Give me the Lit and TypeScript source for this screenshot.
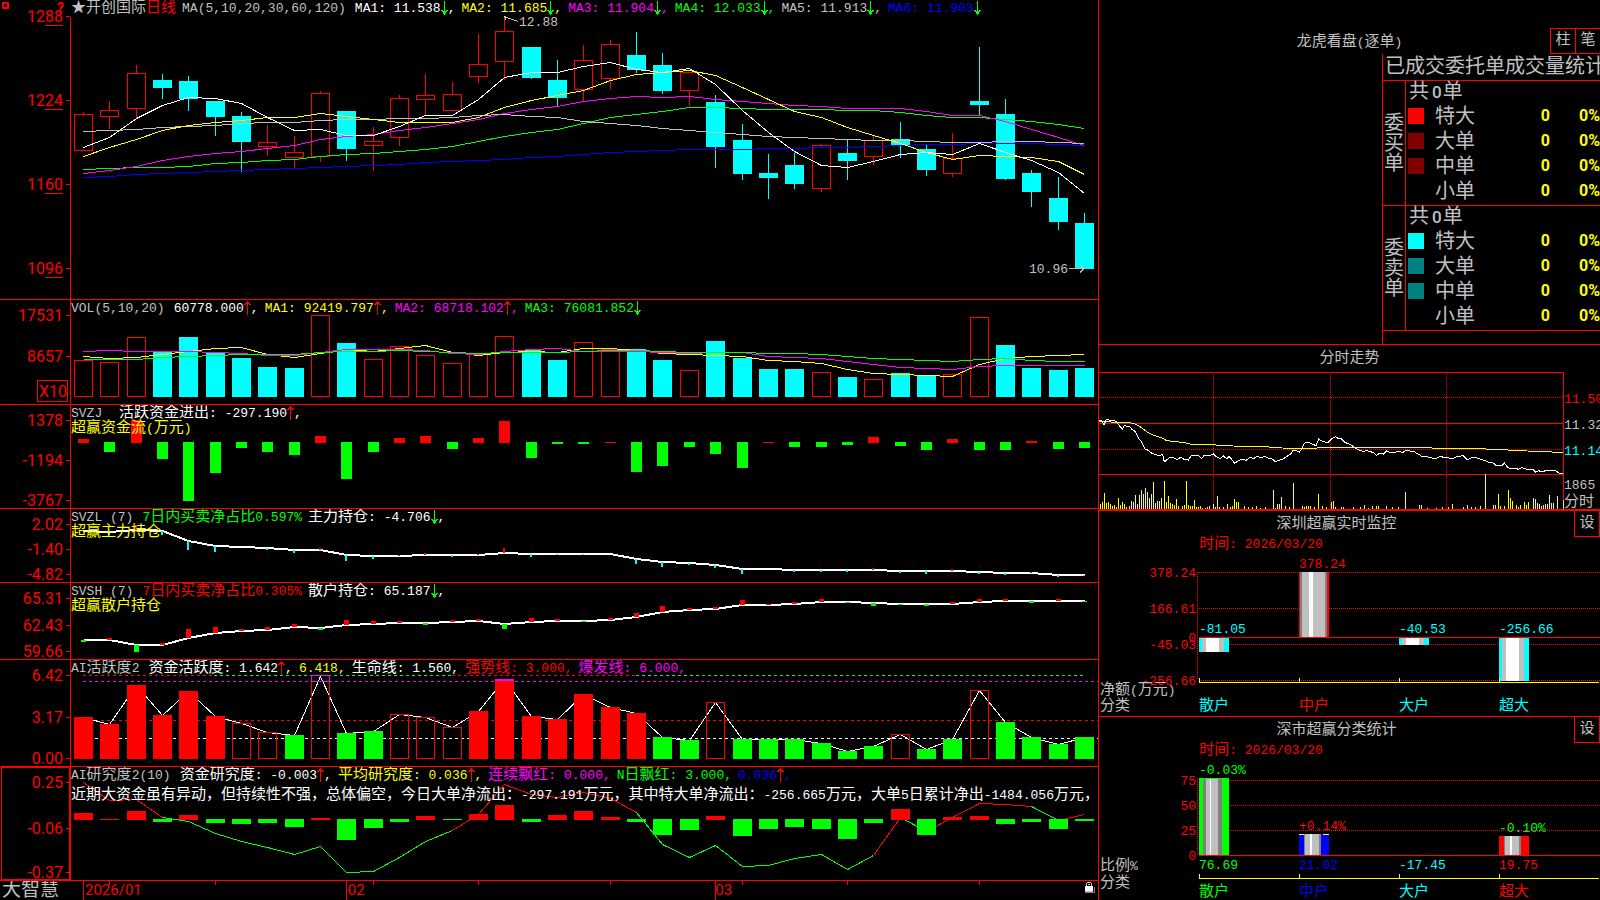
import { LitElement, html, svg, css } from "lit";
import { customElement, property } from "lit/decorators.js";

const RED = "#ff0000";
const GREEN = "#00ff00";
const CYAN = "#00ffff";
const YELLOW = "#ffff00";
const MAGENTA = "#ff00ff";
const WHITE = "#ffffff";
const BLUE = "#0000ff";
const GRAY = "#c0c0c0";
const SHADE = "#808080";

const HAN = /([\u2600-\u9fff\uff00-\uffef]+)/;

/** Wraps runs of Chinese characters so that they get the larger type size. */
const mix = (text: string) =>
  text.split(HAN).map((run) => (HAN.test(run) ? html`<span class="han">${run}</span>` : run));
const mixSvg = (text: string) =>
  text.split(HAN).map((run) => (HAN.test(run) ? svg`<tspan class="han">${run}</tspan>` : svg`<tspan>${run}</tspan>`));

/* ---------- shared drawing helpers ---------- */

const centre = (i: number) => Math.round(83 + 26.34 * i) + 0.5;

const line = (ys: number[], color: string, from = 0, width = 1) =>
  svg`<polyline class="stroke" stroke=${color} stroke-width=${width}
    points=${ys.map((y, k) => `${centre(from + k)},${y + (width === 1 ? 0.5 : 1)}`).join(" ")}></polyline>`;

const seg = (x1: number, y1: number, x2: number, y2: number, color: string, dash = "") =>
  svg`<line class="stroke" x1=${x1} y1=${y1} x2=${x2} y2=${y2} stroke=${color} stroke-dasharray=${dash}></line>`;

const fill = (x: number, y: number, w: number, h: number, color: string) =>
  svg`<rect x=${x} y=${y} width=${w} height=${h} fill=${color}></rect>`;

const frame = (x: number, y: number, w: number, h: number, color: string) =>
  svg`<rect class="stroke" x=${x + 0.5} y=${y + 0.5} width=${w - 1} height=${h - 1} stroke=${color}></rect>`;

interface Box {
  x: number;
  y: number;
  w: number;
  h: number;
}

interface Mark {
  x: number;
  y: number;
  text: string;
  color: string;
  end?: boolean;
}

/** A chart that stretches with its cell while its labels keep their size. */
const plot = (box: Box, shapes: unknown, marks: Mark[] = []) => html`
  <svg class="plot">
    <svg width="100%" height="100%" viewBox="${box.x} ${box.y} ${box.w} ${box.h}" preserveAspectRatio="none">
      ${shapes}
    </svg>
    ${marks.map(
      (m) => svg`<svg class="mark" x="${((m.x - box.x) / box.w) * 100}%" y="${((m.y - box.y) / box.h) * 100}%">
        <text fill=${m.color} dy=${HAN.test(m.text) ? 5 : 4} text-anchor=${m.end ? "end" : "start"}>${mixSvg(m.text)}</text>
      </svg>`,
    )}
  </svg>
`;

/* ---------- price series ---------- */

type Candle = [string, number, number, number, number];
const candles: Candle[] = [
  ["r", 112, 114, 150, 150], ["r", 101, 110, 116, 128], ["r", 65, 73, 108, 117], ["c", 74, 80, 88, 99],
  ["c", 76, 81, 99, 111], ["c", 101, 101, 117, 136], ["c", 112, 116, 142, 172], ["r", 125, 142, 146, 155],
  ["r", 136, 152, 157, 167], ["r", 91, 93, 156, 161], ["c", 111, 111, 149, 161], ["r", 127, 141, 145, 170],
  ["r", 95, 98, 137, 145], ["r", 74, 95, 99, 115], ["r", 82, 94, 110, 110], ["r", 34, 64, 76, 82],
  ["r", 17, 31, 61, 79], ["c", 47, 47, 78, 79], ["c", 60, 80, 98, 107], ["r", 45, 60, 89, 100],
  ["r", 40, 44, 78, 88], ["c", 32, 55, 70, 73], ["c", 53, 65, 91, 94], ["r", 72, 72, 90, 105],
  ["c", 95, 102, 147, 168], ["c", 124, 140, 174, 180], ["c", 154, 173, 178, 199], ["c", 153, 165, 184, 189],
  ["r", 144, 145, 188, 191], ["c", 139, 153, 161, 180], ["r", 136, 140, 156, 164], ["c", 122, 139, 145, 158],
  ["c", 145, 149, 170, 176], ["r", 133, 158, 173, 176], ["c", 47, 101, 105, 115], ["c", 99, 114, 179, 180],
  ["c", 170, 173, 192, 207], ["c", 177, 198, 222, 230], ["c", 213, 223, 269, 269],
];

const averages: [string, number[]][] = [
  [BLUE, [177,176,174,173,172,171,170,169,168,167,166,165,164,162,161,160,159,157,156,154,152,151,150,149,149,149,148,148,147,147,146,145,144,144,143,143,143,144,145]],
  [GREEN, [169,168,167,167,166,163,162,160,159,156,154,153,151,149,146,141,136,132,129,123,117,114,111,107,107,108,109,109,109,110,110,112,115,117,117,119,121,124,128]],
  [MAGENTA, [173,170,166,160,156,153,151,148,145,139,136,134,130,127,123,119,113,109,106,101,98,96,97,96,99,101,103,105,106,108,108,108,111,115,115,121,129,137,145]],
  [GRAY, [131,130,129,127,126,125,123,122,122,120,119,119,118,118,117,115,114,116,117,121,123,125,128,130,132,134,136,137,138,139,140,140,141,142,142,141,141,142,143]],
  [YELLOW, [156,147,139,130,125,122,120,117,117,113,116,119,122,122,122,117,107,100,95,90,80,74,72,70,75,87,99,111,117,127,135,143,152,159,155,156,157,161,174]],
  [WHITE, [147,137,118,105,97,98,103,117,130,129,135,135,126,115,115,99,77,72,72,66,62,69,72,68,84,110,132,151,165,167,161,154,152,154,143,152,160,172,193]],
];

const hollowVolumes = new Set([0, 1, 2, 9, 11, 12, 13, 14, 15, 16, 19, 20, 23, 28, 30, 33, 34]);
const volumeTops = [60,62,37,52,37,53,58,67,68,15,43,59,46,55,63,53,36,50,60,42,49,49,60,70,41,58,69,69,72,77,79,73,76,74,17,45,68,70,68];
const volumeAverages: [string, number[]][] = [
  [YELLOW, [56,58,57,54,51,48,47,54,57,53,49,51,48,45,52,55,52,51,52,48,48,50,53,54,55,56,60,61,63,69,73,74,75,76,64,58,56,55,54]],
  [MAGENTA, [51,50,51,51,51,52,53,55,55,52,49,49,49,50,53,54,51,49,48,51,51,51,52,53,52,52,56,57,58,61,64,67,68,69,66,65,65,65,65]],
  [GREEN, [59,59,59,57,56,55,54,54,54,52,51,51,50,51,52,53,52,52,52,51,50,50,51,52,52,52,53,53,54,56,58,59,60,61,59,58,60,61,61]],
];

const flow = [4,-10,23,-17,-59,-31,-6,-10,-13,7,-37,-10,5,7,-7,5,22,-16,-2,-2,1,-30,-24,-5,-12,-26,1,-5,-5,-3,6,-4,-8,4,-8,-8,2,-7,-6];

const mainHold = [21,22,20,21,31,36,37,38,40,40,45,46,46,45,45,45,43,44,44,44,44,49,52,53,55,59,59,60,60,60,60,61,61,61,62,63,63,65,65];
const mainSticks = [1,-3,5,-4,-9,-6,0,-2,-3,2,-6,-3,1,2,-2,1,5,-3,-1,-1,0,-5,-5,-2,-3,-5,0,-2,-2,-2,2,-2,-3,2,-2,-2,1,-2,-1];

const retailHold = [56,56,61,61,54,49,47,46,43,44,41,40,39,39,38,37,40,38,37,37,36,33,28,26,25,21,21,20,18,18,19,20,20,20,18,17,17,17,17];
const retailSticks = [-2,2,-7,2,9,6,2,3,3,-2,5,3,2,-2,2,2,-5,4,2,-1,2,4,6,2,2,5,1,2,3,-1,-3,-1,-2,2,3,2,-2,2,-1];

const activity = [57,64,25,55,31,56,63,72,75,16,73,71,54,57,67,51,19,56,59,34,47,53,77,80,42,79,79,79,83,91,86,74,89,79,30,62,77,84,77];
const activityKind = "RRRRRRhhghgghhhRRRRRRRgghgggggghgghgggg";

const research = [7,1,9,-3,5,-4,-5,-4,-8,2,-21,-9,-3,4,-1,6,15,-3,5,9,3,-3,-16,-11,4,-17,-10,-8,-10,-20,-4,11,-16,3,4,-5,-3,-10,-2];
const researchLine = [15,33,32,50,54,66,74,80,87,79,105,104,90,74,63,47,17,27,30,25,31,45,77,90,78,99,98,91,87,102,88,50,64,50,36,37,39,53,47];
const researchRuns: [number, number, string][] = [
  [0, 3, RED], [3, 14, GREEN], [14, 21, RED], [21, 30, GREEN], [30, 31, RED],
  [31, 32, GREEN], [32, 36, RED], [36, 37, GREEN], [37, 38, RED],
];

const cell = (h: number): Box => ({ x: 71, y: 0, w: 1027, h });

const signedBars = (values: number[], base: number, width: number) =>
  values.map((v, i) =>
    v > 0
      ? fill(centre(i) - width / 2, base + 1 - v, width, v, RED)
      : fill(centre(i) - width / 2, base, width, -v, GREEN),
  );

const priceChart = () =>
  plot(
    cell(299),
    svg`
      ${candles.map(([kind, high, top, bottom, low], i) => {
        const x = centre(i);
        return kind === "c"
          ? svg`${seg(x, high, x, low, CYAN)}${fill(x - 9.5, top, 19, bottom - top, CYAN)}`
          : svg`${seg(x, high, x, top, RED)}${seg(x, bottom, x, low + 1, RED)}${frame(x - 9.5, top, 19, bottom - top + 1, RED)}`;
      })}
      ${averages.map(([color, ys]) => line(ys, color))}
      ${seg(504, 16.5, 518, 21.5, GRAY)}${seg(504.5, 16.5, 506, 20, GRAY)}
      ${seg(1069, 268.5, 1084, 268.5, GRAY)}
      ${seg(1080, 264.5, 1084, 268.5, GRAY)}${seg(1080, 272.5, 1084, 268.5, GRAY)}`,
    [
      { x: 519, y: 22, text: "12.88", color: GRAY },
      { x: 1029, y: 269, text: "10.96", color: GRAY },
    ],
  );

const volumeChart = () =>
  plot(
    cell(104),
    svg`
      ${volumeTops.map((top, i) => {
        const x = centre(i) - 9.5;
        return hollowVolumes.has(i) ? frame(x, top, 19, 97 - top, RED) : fill(x, top, 19, 97 - top, CYAN);
      })}
      ${volumeAverages.map(([color, ys]) => line(ys, color))}`,
  );

const mainChart = () =>
  plot(
    cell(73),
    svg`
      ${line(mainHold, WHITE, 0, 2)}
      ${mainSticks.map((v, i) =>
        v > 0
          ? fill(centre(i) - 1.5, mainHold[i] + 1 - v, 2, v, RED)
          : fill(centre(i) - 1.5, mainHold[i] + 1, 2, -v, CYAN),
      )}`,
  );

const retailChart = () =>
  plot(
    cell(76),
    svg`
      ${line(retailHold, WHITE, 0, 2)}
      ${retailSticks.map((v, i) =>
        v > 0
          ? fill(centre(i) - 2.5, retailHold[i] + 1 - v, 5, v, RED)
          : fill(centre(i) - 2.5, retailHold[i] + 1, 5, -v, GREEN),
      )}`,
  );

const activityChart = () =>
  plot(
    cell(106),
    svg`
      ${seg(83, 15.5, 214, 15.5, RED, "3 3")}${seg(214, 15.5, 452, 15.5, GREEN, "3 3")}
      ${seg(452, 15.5, 636, 15.5, RED, "3 3")}${seg(636, 15.5, 1084, 15.5, GREEN, "3 3")}
      ${seg(83, 21.5, 1098, 21.5, MAGENTA, "3 3")}
      ${seg(83, 60.5, 1098, 60.5, RED, "3 3")}
      ${seg(83, 78.5, 1098, 78.5, WHITE, "3 3")}
      ${line(activity, WHITE)}
      ${activity.map((top, i) => {
        const x = centre(i) - 9.5;
        const kind = activityKind[i];
        if (kind === "h") return frame(x, i === 9 ? 21 : top, 19, 99 - (i === 9 ? 21 : top), RED);
        return fill(x, top, 19, 99 - top, kind === "R" ? RED : GREEN);
      })}
      ${frame(centre(9) - 9.5, 15, 19, 7, MAGENTA)}
      ${fill(centre(16) - 9.5, 19, 19, 2, MAGENTA)}`,
  );

const researchChart = () =>
  plot(
    cell(113),
    svg`
      ${researchRuns.map(([a, b, color]) => line(researchLine.slice(a, b + 1), color, a))}
      ${signedBars(research, 52, 19)}`,
  );

const timeAxis = () =>
  plot(
    { x: 71, y: 0, w: 1027, h: 19 },
    svg`
      ${[0, 10, 24].map((i) => seg(centre(i), 0, centre(i), 19, RED))}
      ${[1, 5, 11, 15, 20, 25, 29, 34].map((i) => seg(centre(i), 0, centre(i), 4, RED))}`,
  );

/* ---------- indicator rows ---------- */

interface Legend {
  text: string;
  color: string;
  arrow?: "up" | "down";
  plain?: boolean;
}

interface Indicator {
  name: string;
  title?: string;
  titleColor?: string;
  rows: number;
  legend: Legend[];
  ticks: [string, number][];
  chart: () => unknown;
}

const indicators: Indicator[] = [
  {
    name: "MA(5,10,20,30,60,120)",
    rows: 299,
    legend: [
      { text: "MA1: 11.538", color: WHITE, arrow: "down" },
      { text: "MA2: 11.685", color: YELLOW, arrow: "down" },
      { text: "MA3: 11.904", color: MAGENTA, arrow: "down" },
      { text: "MA4: 12.033", color: GREEN, arrow: "down" },
      { text: "MA5: 11.913", color: GRAY, arrow: "down" },
      { text: "MA6: 11.903", color: BLUE, arrow: "down", plain: true },
    ],
    ticks: [["1288", 16], ["1224", 100], ["1160", 184], ["1096", 268]],
    chart: priceChart,
  },
  {
    name: "VOL(5,10,20)",
    rows: 104,
    legend: [
      { text: "60778.000", color: WHITE, arrow: "up" },
      { text: "MA1: 92419.797", color: YELLOW, arrow: "up" },
      { text: "MA2: 68718.102", color: MAGENTA, arrow: "up" },
      { text: "MA3: 76081.852", color: GREEN, arrow: "down", plain: true },
    ],
    ticks: [["17531", 15], ["8657", 56]],
    chart: volumeChart,
  },
  {
    name: "SVZJ ",
    title: "超赢资金流(万元)",
    rows: 103,
    legend: [{ text: "活跃资金进出: -297.190", color: WHITE, arrow: "up" }],
    ticks: [["1378", 15], ["-1194", 55], ["-3767", 95]],
    chart: () => plot(cell(103), signedBars(flow, 37, 11)),
  },
  {
    name: "SVZL (7)",
    title: "超赢主力持仓",
    rows: 73,
    legend: [
      { text: "7日内买卖净占比0.597%", color: GREEN, plain: true },
      { text: "主力持仓: -4.706", color: WHITE, arrow: "down" },
    ],
    ticks: [["2.02", 15], ["-1.40", 40], ["-4.82", 65]],
    chart: mainChart,
  },
  {
    name: "SVSH (7)",
    title: "超赢散户持仓",
    rows: 76,
    legend: [
      { text: "7日内买卖净占比0.305%", color: RED, plain: true },
      { text: "散户持仓: 65.187", color: WHITE, arrow: "down" },
    ],
    ticks: [["65.31", 15], ["62.43", 42], ["59.66", 68]],
    chart: retailChart,
  },
  {
    name: "AI活跃度2",
    rows: 106,
    legend: [
      { text: "资金活跃度: 1.642", color: WHITE, arrow: "up" },
      { text: "6.418", color: YELLOW },
      { text: "生命线: 1.560", color: WHITE },
      { text: "强势线: 3.000", color: RED },
      { text: "爆发线: 6.000", color: MAGENTA },
    ],
    ticks: [["6.42", 15], ["3.17", 57], ["0.00", 98]],
    chart: activityChart,
  },
  {
    name: "AI研究度2(10)",
    title: "近期大资金虽有异动，但持续性不强，总体偏空，今日大单净流出：-297.191万元，其中特大单净流出：-256.665万元，大单5日累计净出-1484.056万元，",
    titleColor: WHITE,
    rows: 113,
    legend: [
      { text: "资金研究度: -0.003", color: WHITE, arrow: "up" },
      { text: "平均研究度: 0.036", color: YELLOW, arrow: "up" },
      { text: "连续飘红: 0.000", color: MAGENTA },
      { text: "N日飘红: 3.000", color: GREEN },
      { text: "0.036", color: BLUE, arrow: "up" },
    ],
    ticks: [["0.25", 15], ["-0.06", 61], ["-0.37", 105]],
    chart: researchChart,
  },
];

const base = css`
  .plot {
    display: block;
    width: 100%;
    height: 100%;
    min-height: 0;
    overflow: hidden;
    shape-rendering: crispEdges;
  }
  .mark {
    overflow: visible;
  }
  .stroke {
    fill: none;
    vector-effect: non-scaling-stroke;
  }
  .han {
    font-size: 15px;
  }
  text {
    white-space: pre;
  }
`;

@customElement("indicator-panel")
export class IndicatorPanel extends LitElement {
  @property({ attribute: false }) data!: Indicator;
  @property({ type: Number }) index = 0;

  static styles = [
    base,
    css`
      :host {
        display: grid;
        grid-template-columns: 71px minmax(0, 1fr);
        min-height: 0;
        border-bottom: 1px solid #ff0000;
      }
      .axis {
        display: block;
        width: 71px;
        height: 100%;
        min-height: 0;
        shape-rendering: crispEdges;
        font-family: Roboto, "Liberation Sans", sans-serif;
        font-size: 16px;
        overflow: hidden;
      }
      .body {
        display: grid;
        grid-template: minmax(0, 1fr) / minmax(0, 1fr);
        min-height: 0;
      }
      .body > * {
        grid-area: 1 / 1;
      }
      .head {
        z-index: 1;
        overflow: hidden;
        align-self: start;
        padding-top: 1px;
      }
      .legend {
        display: flex;
        gap: 6px;
        height: 15px;
        line-height: 15px;
        white-space: pre;
      }
      .name {
        color: #c0c0c0;
        padding-right: 3px;
      }
      .stock {
        color: #c0c0c0;
      }
      .period {
        color: #ff0000;
      }
      .item {
        display: flex;
      }
      .arrow {
        width: 7px;
        height: 14px;
        shape-rendering: crispEdges;
      }
      .title {
        margin: 0;
        height: 16px;
        line-height: 16px;
        font-weight: 400;
        font-size: 13px;
        white-space: pre;
      }
      .long {
        padding-top: 5px;
      }
    `,
  ];

  private arrow(dir: "up" | "down") {
    const color = dir === "up" ? RED : GREEN;
    return html`<svg class="arrow" viewBox="0 0 7 14" aria-hidden="true">
      <path fill=${color} d=${dir === "up" ? "M3 0h1v1h1v1h1v1h1v1h-2v-1h-1v11h-1v-11h-1v1h-2v-1h1v-1h1v-1h1z" : "M3 0h1v10h1v-1h2v1h-1v1h-1v2h-1v1h-1v-1h-1v-2h-1v-1h-1v-1h2v1h1z"}></path>
    </svg>`;
  }

  render() {
    const { name, title, titleColor, rows, legend, ticks, chart } = this.data;
    const first = this.index === 0;
    return html`
      <svg class="axis">
        <line x1="70.5" x2="70.5" y1=${first ? 17 : 0} y2="100%" stroke=${RED}></line>
        ${this.index === 6
          ? svg`<rect x="1.5" y="0.5" width="68" height="99%" fill="none" stroke=${RED}></rect>
              <line x1="69.5" x2="69.5" y1="0" y2="100%" stroke=${RED}></line>`
          : ""}
        ${ticks.map(
          ([label, y]) => svg`<svg class="mark" y="${(y / rows) * 100}%">
            <line x1="66" x2="70" y1="0.5" y2="0.5" stroke=${RED}></line>
            <text x="63" y="6" text-anchor="end" fill=${RED}>${label}</text>
            ${first ? svg`<line x1="45" x2="63" y1="9.5" y2="9.5" stroke=${RED}></line>` : ""}
          </svg>`,
        )}
        ${first
          ? svg`<rect x="3" y="3" width="5" height="5" fill="none" stroke=${RED} stroke-width="2"></rect>
              <text x="57" y="13" fill=${RED} font-size="14" font-weight="700">?</text>`
          : ""}
        ${this.index === 1
          ? svg`<svg class="mark" y="${(80 / 104) * 100}%">
              <rect x="37.5" y="0.5" width="30" height="21" fill="#000000" stroke=${RED}></rect>
              <text x="39" y="17" fill=${RED}>X10</text>
            </svg>`
          : ""}
      </svg>
      <div class="body">
        ${chart()}
        <div class="head">
          <div class="legend">
            ${first
              ? html`<span class="item"><span class="stock">${mix("★开创国际")}</span><span class="period">${mix("日线")}</span></span>`
              : ""}
            <span class="name">${mix(name)}</span>
            ${legend.map(
              (l) => html`<span class="item" style="color:${l.color}"><span>${mix(l.text)}</span>${l.arrow ? this.arrow(l.arrow) : ""}${l.plain ? "" : html`<span>,</span>`}</span>`,
            )}
          </div>
          ${title
            ? html`<h2 class="title ${titleColor ? "long" : ""}" style="color:${titleColor ?? YELLOW}">${mix(title)}</h2>`
            : ""}
        </div>
      </div>
    `;
  }
}

/* ---------- right column ---------- */

@customElement("order-stats")
export class OrderStats extends LitElement {
  static styles = [
    base,
    css`
      :host {
        display: flex;
        flex-direction: column;
        min-height: 0;
        overflow: hidden;
        color: #c0c0c0;
        border-bottom: 1px solid #ff0000;
      }
      .bar {
        display: grid;
        padding-top: 28px;
        height: 26px;
        flex: none;
      }
      .bar > * {
        grid-area: 1 / 1;
      }
      .heading {
        margin: 0;
        font-size: 13px;
        font-weight: 400;
        line-height: 30px;
        text-align: center;
      }
      .buttons {
        justify-self: end;
        height: 24px;
        display: flex;
        border: 1px solid #ff0000;
        border-right: 0;
      }
      button {
        width: 24px;
        padding: 0;
        border: 0;
        background: #000000;
        color: #c0c0c0;
        font: inherit;
        font-size: 15px;
        line-height: 22px;
      }
      button + button {
        border-left: 1px solid #ff0000;
        width: 25px;
      }
      .stats {
        flex: 1;
        align-self: flex-end;
        width: 218px;
        box-sizing: border-box;
        border-left: 1px solid #ff0000;
        font-size: 20px;
        overflow: hidden;
      }
      h3 {
        margin: 0;
        height: 26px;
        line-height: 28px;
        white-space: nowrap;
        padding-left: 2px;
        font-size: 20px;
        font-weight: 400;
      }
      table {
        width: 100%;
        table-layout: fixed;
        border-spacing: 0;
        line-height: 24px;
      }
      th,
      td {
        box-sizing: border-box;
        height: 25px;
        padding: 0;
        font-weight: 400;
        text-align: left;
        white-space: nowrap;
      }
      .top {
        border-top: 1px solid #ff0000;
      }
      .total {
        padding-left: 3px;
      }
      .side {
        border-right: 1px solid #ff0000;
        white-space: normal;
        line-height: 20px;
        padding: 4px 0 0 1px;
        font-size: 20px;
        word-break: break-all;
      }
      .key {
        vertical-align: top;
      }
      .swatch {
        display: block;
        width: 16px;
        height: 16px;
        margin: 3px 0 0 2px;
      }
      .num {
        font-family: Roboto, "Liberation Sans", sans-serif;
        font-size: 16px;
        font-weight: 700;
        line-height: 22px;
        color: #ffff00;
        text-align: right;
        vertical-align: top;
      }
      .count {
        font-family: Roboto, "Liberation Sans", sans-serif;
        font-size: 17px;
        font-weight: 500;
        line-height: 1;
        padding: 0 1px 0 3px;
      }
      .end {
        height: 1px;
        background: #ff0000;
      }
      .c-side {
        width: 23px;
      }
      .c-swatch {
        width: 29px;
      }
      .c-label {
        width: 65px;
      }
      .c-count {
        width: 50px;
      }
    `,
  ];

  render() {
    const groups = [
      { side: "委买单", colors: ["#ff0000", "#800000", "#800000", "#000000"] },
      { side: "委卖单", colors: ["#00ffff", "#008080", "#008080", "#000000"] },
    ];
    const names = ["特大", "大单", "中单", "小单"];
    return html`
      <div class="bar">
        <h2 class="heading">${mix("龙虎看盘(逐单)")}</h2>
        <div class="buttons"><button>柱</button><button>笔</button></div>
      </div>
      <div class="stats">
        <h3 id="stats-title">已成交委托单成交量统计</h3>
        <table aria-labelledby="stats-title">
          <colgroup>
            <col class="c-side" /><col class="c-swatch" /><col class="c-label" /><col class="c-count" /><col />
          </colgroup>
          ${groups.map(
            (g) => html`<tbody>
              <tr>
                <th class="side top" rowspan="5" scope="rowgroup">${g.side}</th>
                <td class="top total" colspan="4">共<span class="count">0</span>单</td>
              </tr>
              ${names.map(
                (n, i) => html`<tr>
                  <td class="key"><span class="swatch" style="background:${g.colors[i]}"></span></td>
                  <th scope="row">${n}</th>
                  <td class="num">0</td>
                  <td class="num">0%</td>
                </tr>`,
              )}
            </tbody>`,
          )}
        </table>
        <div class="end"></div>
      </div>
    `;
  }
}

/* Intraday coordinates run in thirds of a pixel for finer detail. */
const intraday =
  "27,243 33,240 42,255 48,240 54,237 62,243 68,240 80,246 88,257 97,267 103,255 110,259 120,261 126,268 135,274 145,294 155,306 165,327 175,331 182,338 200,345 212,346 218,343 223,366 232,358 240,352 250,352 260,359 272,352 282,358 295,360 304,346 316,347 326,347 334,356 342,347 362,346 370,342 378,350 390,356 400,348 410,356 417,350 425,358 434,370 444,363 458,357 468,361 480,352 490,356 500,350 512,352 524,350 535,354 547,357 556,366 566,361 578,358 590,350 602,342 610,330 618,331 628,336 636,325 644,309 656,307 666,312 678,317 686,297 696,303 706,306 716,306 726,296 736,290 744,295 755,297 765,307 776,312 786,317 796,324 808,331 820,334 830,332 842,335 852,339 860,346 868,340 880,342 890,333 902,338 914,338 926,333 938,338 948,330 960,333 974,336 984,342 994,348 1010,350 1024,353 1036,357 1050,350 1065,352 1088,356 1100,350 1120,347 1132,360 1146,353 1160,354 1180,360 1195,366 1210,369 1218,376 1236,376 1243,369 1252,381 1262,387 1275,384 1285,388 1295,383 1310,388 1328,388 1337,397 1346,392 1356,396 1366,392 1380,391 1396,391 1406,399 1419,401";
const intradayMean =
  "27,243 60,246 115,247 135,252 150,260 170,275 190,286 215,293 230,302 285,308 305,313 375,314 385,317 430,318 523,320 575,324 680,325 684,322 1024,322 1028,325 1184,325 1190,328 1252,329 1256,331 1312,333 1370,335 1419,338";
const intradayVolume: [number, number][] = [
  [31,492],[37,486],[43,460],[49,489],[55,486],[61,492],[67,498],[73,495],[79,500],[85,474],[91,495],[97,486],[103,492],[109,500],[118,499],[124,483],[130,486],[136,465],[142,492],[148,465],[154,450],[160,462],[166,444],[172,456],[178,474],[184,462],[190,426],[196,489],[202,483],[208,483],[214,474],[223,423],[229,486],[235,468],[241,489],[247,492],[253,495],[259,477],[265,498],[277,498],[283,495],[289,423],[295,495],[301,498],[307,498],[313,480],[319,500],[325,500],[331,498],[337,503],[346,503],[352,501],[358,498],[370,492],[376,500],[382,468],[388,500],[400,501],[412,492],[420,501],[426,498],[433,477],[439,486],[445,486],[463,498],[475,501],[487,501],[499,498],[511,503],[526,501],[550,450],[556,503],[562,492],[568,492],[574,471],[586,498],[598,501],[610,429],[637,498],[643,501],[649,498],[655,498],[661,498],[673,501],[685,462],[697,498],[709,501],[724,486],[730,483],[736,500],[754,501],[760,501],[790,501],[811,501],[823,495],[835,503],[847,498],[859,498],[865,498],[889,498],[907,501],[925,501],[946,456],[988,495],[994,495],[1012,503],[1040,503],[1058,501],[1075,500],[1087,492],[1120,501],[1132,495],[1144,500],[1156,501],[1172,498],[1186,403],[1210,495],[1216,495],[1225,462],[1231,498],[1243,498],[1255,450],[1261,474],[1267,483],[1279,495],[1285,501],[1291,495],[1303,486],[1309,495],[1315,486],[1330,474],[1336,477],[1342,489],[1348,492],[1354,498],[1360,495],[1366,492],[1372,492],[1378,465],[1384,489],[1390,489],[1402,468],[1420,480],
];

@customElement("intraday-panel")
export class IntradayPanel extends LitElement {
  static styles = [
    base,
    css`
      :host {
        display: flex;
        flex-direction: column;
        min-height: 0;
        border-bottom: 1px solid #ff0000;
      }
      h2 {
        margin: 0;
        flex: none;
        height: 27px;
        line-height: 27px;
        text-align: center;
        font-weight: 400;
        font-size: 15px;
        color: #c0c0c0;
      }
      .area {
        flex: 1;
        display: flex;
        min-height: 0;
      }
      .graph {
        flex: 1;
        min-width: 0;
        min-height: 0;
      }
      .scale {
        flex: none;
        width: 36px;
        height: 100%;
        overflow: hidden;
      }
    `,
  ];

  render() {
    const labels: [string, number, string][] = [
      ["11.50", 26, RED], ["11.32", 52, GRAY], ["11.14", 78, CYAN], ["1865", 112, GRAY], ["分时", 129, GRAY],
    ];
    return html`
      <h2>分时走势</h2>
      <div class="area">
        <div class="graph">
          ${plot(
            { x: 27, y: 96, w: 1395, h: 411 },
            svg`
              ${[172, 328].map((y) => seg(27, y, 1420, y, RED, "1 1"))}
              ${[370, 721, 1069].map((x) => seg(x, 97, x, 507, RED, "1 1"))}
              ${[97, 250, 403].map((y) => seg(27, y, 1422, y, RED))}
              ${seg(1420, 97, 1420, 507, RED)}
              ${intradayVolume.map(([x, y]) => fill(x - 1, y, 3, 507 - y, YELLOW))}
              <polyline class="stroke" stroke=${YELLOW} points=${intradayMean}></polyline>
              <polyline class="stroke" stroke=${WHITE} points=${intraday}></polyline>`,
          )}
        </div>
        <svg class="scale">
          ${labels.map(
            ([t, y, c]) => svg`<svg class="mark" y="${(y / 137) * 100}%"><text fill=${c} dy="5">${mixSvg(t)}</text></svg>`,
          )}
        </svg>
      </div>
    `;
  }
}

type Stripe = [number, string];

interface Column {
  name: string;
  nameColor: string;
  label: string;
  labelColor: string;
  labelY: number;
  bar?: { y: number; h: number; stripes: Stripe[]; cap?: string };
  value?: string;
  valueColor?: string;
}

interface Category {
  title: string;
  h: number;
  ticks: [string, number][];
  dotted: number[];
  zero: number;
  dotTop: number;
  dotBottom: number;
  axis: number;
  nameY: number;
  side: [string, number][];
  columns: Column[];
}

const cyanStripes: Stripe[] = [[3, CYAN], [4, GRAY], [13, WHITE], [5, GRAY], [5, CYAN]];

const categories: Category[] = [
  {
    title: "深圳超赢实时监控",
    h: 205,
    ticks: [["378.24", 62], ["166.61", 98], ["0", 127], ["-45.03", 134], ["-256.66", 170]],
    dotted: [61, 97, 133, 169],
    zero: 126,
    dotTop: 61,
    dotBottom: 169,
    axis: 171,
    nameY: 194,
    side: [["净额(万元)", 178], ["分类", 194]],
    columns: [
      { name: "散户", nameColor: CYAN, label: "-81.05", labelColor: CYAN, labelY: 118, bar: { y: 127, h: 14, stripes: cyanStripes } },
      { name: "中户", nameColor: RED, label: "378.24", labelColor: RED, labelY: 53, bar: { y: 61, h: 65, stripes: [[1, RED], [2, SHADE], [7, GRAY], [4, WHITE], [12, GRAY], [2, SHADE], [2, RED]] } },
      { name: "大户", nameColor: CYAN, label: "-40.53", labelColor: CYAN, labelY: 118, bar: { y: 127, h: 7, stripes: cyanStripes } },
      { name: "超大", nameColor: CYAN, label: "-256.66", labelColor: CYAN, labelY: 118, bar: { y: 127, h: 43, stripes: cyanStripes } },
    ],
  },
  {
    title: "深市超赢分类统计",
    h: 183,
    ticks: [["75", 64], ["50", 89], ["25", 114], ["0", 139]],
    dotted: [63, 88, 113],
    zero: 138,
    dotTop: 61,
    dotBottom: 138,
    axis: 161,
    nameY: 174,
    side: [["比例%", 148], ["分类", 165]],
    columns: [
      { name: "散户", nameColor: GREEN, label: "-0.03%", labelColor: GREEN, labelY: 53, value: "76.69", valueColor: GREEN, bar: { y: 61, h: 77, cap: GREEN, stripes: [[4, GREEN], [3, SHADE], [4, GRAY], [1, WHITE], [7, GRAY], [4, SHADE], [7, GREEN]] } },
      { name: "中户", nameColor: BLUE, label: "+0.14%", labelColor: RED, labelY: 109, value: "21.02", valueColor: BLUE, bar: { y: 117, h: 21, cap: YELLOW, stripes: [[5, BLUE], [1, SHADE], [5, GRAY], [2, WHITE], [7, GRAY], [2, SHADE], [8, BLUE]] } },
      { name: "大户", nameColor: CYAN, label: "", labelColor: CYAN, labelY: 118, value: "-17.45", valueColor: CYAN },
      { name: "超大", nameColor: RED, label: "-0.10%", labelColor: GREEN, labelY: 111, value: "19.75", valueColor: RED, bar: { y: 119, h: 19, stripes: [[5, RED], [1, SHADE], [5, GRAY], [2, WHITE], [7, GRAY], [2, SHADE], [8, RED]] } },
    ],
  },
];

@customElement("category-panel")
export class CategoryPanel extends LitElement {
  @property({ attribute: false }) data!: Category;

  static styles = [
    base,
    css`
      :host {
        display: grid;
        grid-template: minmax(0, 1fr) / minmax(0, 1fr);
        min-height: 0;
        border-top: 1px solid #ff0000;
      }
      .plot {
        grid-area: 1 / 1;
      }
      .head {
        grid-area: 1 / 1;
        z-index: 1;
        align-self: start;
      }
      .bar {
        display: flex;
        height: 26px;
      }
      h2 {
        flex: 1;
        margin: 0;
        font-size: 15px;
        font-weight: 400;
        line-height: 27px;
        text-align: center;
        color: #c0c0c0;
      }
      button {
        width: 26px;
        height: 26px;
        padding: 0;
        border: 1px solid #ff0000;
        border-top: 0;
        background: #000000;
        color: #c0c0c0;
        font: inherit;
        font-size: 15px;
        line-height: 24px;
      }
      .date {
        padding-left: 20%;
        color: #ff0000;
        line-height: 15px;
        white-space: pre;
      }
    `,
  ];

  render() {
    const d = this.data;
    const left = (k: number) => 1199 + 100 * k;
    const marks: Mark[] = [
      ...d.ticks.map(([text, y]) => ({ x: 1196, y, text, color: RED, end: true })),
      ...d.side.map(([text, y]) => ({ x: 1100, y, text, color: GRAY })),
      ...d.columns.flatMap((c, k) => [
        ...(c.label ? [{ x: left(k), y: c.labelY, text: c.label, color: c.labelColor }] : []),
        ...(c.value ? [{ x: left(k), y: 148, text: c.value, color: c.valueColor! }] : []),
        { x: left(k), y: d.nameY, text: c.name, color: c.nameColor },
      ]),
    ];
    return html`
      ${plot(
        { x: 1099, y: 0, w: 501, h: d.h },
        svg`
          ${d.dotted.map((y) => seg(1199, y + 0.5, 1600, y + 0.5, RED, "1 1"))}
          ${seg(1197.5, d.dotTop, 1197.5, d.dotBottom, RED, "1 1")}
          ${seg(1199, d.zero + 0.5, 1600, d.zero + 0.5, RED)}
          ${d.columns.map((c, k) => {
            const bar = c.bar;
            if (!bar) return "";
            let x = left(k);
            return svg`${bar.stripes.map(([w, color]) => {
              const r = fill(x, bar.y, w, bar.h, color);
              x += w;
              return r;
            })}${bar.cap === GREEN ? fill(left(k), bar.y, 30, 1, GREEN) : ""}${
              bar.cap === YELLOW
                ? svg`${fill(left(k), bar.y, 5, 1, YELLOW)}${fill(left(k) + 24, bar.y, 6, 1, YELLOW)}`
                : ""
            }`;
          })}
          ${seg(1199, d.axis + 0.5, 1599, d.axis + 0.5, YELLOW)}
          ${[0, 1, 2, 3].map((k) => seg(left(k) + 0.5, d.axis - 4, left(k) + 0.5, d.axis, YELLOW))}`,
        marks,
      )}
      <div class="head">
        <div class="bar">
          <h2>${d.title}</h2>
          <button>设</button>
        </div>
        <div class="date">${mix("时间: 2026/03/20")}</div>
      </div>
    `;
  }
}

@customElement("app-root")
export class AppRoot extends LitElement {
  static styles = [
    base,
    css`
      :host {
        display: grid;
        grid-template-columns: minmax(0, 1098fr) minmax(0, 502fr);
        height: 100vh;
        overflow: hidden;
        background: #000000;
        color: #c0c0c0;
        font-family: "Liberation Mono", "Noto Sans CJK SC", monospace;
        font-size: 13px;
      }
      .charts {
        display: grid;
        grid-template-rows:
          minmax(0, 300fr) minmax(0, 105fr) minmax(0, 104fr) minmax(0, 74fr)
          minmax(0, 77fr) minmax(0, 107fr) minmax(0, 114fr) 19px;
        min-height: 0;
      }
      .info {
        display: grid;
        grid-template-rows: minmax(0, 345fr) minmax(0, 165fr) minmax(0, 206fr) minmax(0, 184fr);
        min-height: 0;
        border-left: 1px solid #ff0000;
      }
      .foot {
        display: grid;
        grid-template-columns: 71px minmax(0, 1fr);
        overflow: hidden;
      }
      .brand {
        padding-left: 2px;
        font-size: 19px;
        line-height: 20px;
        white-space: nowrap;
      }
      .times {
        display: grid;
        grid-template: 19px / minmax(0, 1fr);
      }
      .times > * {
        grid-area: 1 / 1;
      }
      .months {
        display: grid;
        grid-template-columns: 263fr 368fr 370fr auto;
        padding: 0 3px 0 14px;
        font-family: Roboto, "Liberation Sans", sans-serif;
        font-size: 15px;
        line-height: 19px;
        color: #ff0000;
      }
      .lock {
        width: 10px;
        height: 12px;
        margin-top: 1px;
        shape-rendering: crispEdges;
      }
    `,
  ];

  render() {
    return html`
      <main class="charts">
        ${indicators.map((d, i) => html`<indicator-panel .data=${d} .index=${i}></indicator-panel>`)}
        <footer class="foot">
          <span class="brand">大智慧</span>
          <div class="times">
            ${timeAxis()}
            <div class="months">
              <span>2026/01</span><span>02</span><span>03</span>
              <svg class="lock" viewBox="0 0 10 12" aria-hidden="true">
                <path fill="#c0c0c0" d="M2 0h4v1h-4zM1 1h1v3h-1zM6 1h1v3h-1zM3 2h2v1h-2z"></path>
                <path fill="#808080" d="M8 5h2v6h-10v-1h9v-5z"></path>
                <path fill="#ffffff" d="M0 4h8v6h-8z"></path>
                <path fill="#c0c0c0" d="M0 4h1v1h-1zM0 9h8v1h-8z"></path>
              </svg>
            </div>
          </div>
        </footer>
      </main>
      <aside class="info">
        <order-stats></order-stats>
        <intraday-panel></intraday-panel>
        ${categories.map((d) => html`<category-panel .data=${d}></category-panel>`)}
      </aside>
    `;
  }
}
